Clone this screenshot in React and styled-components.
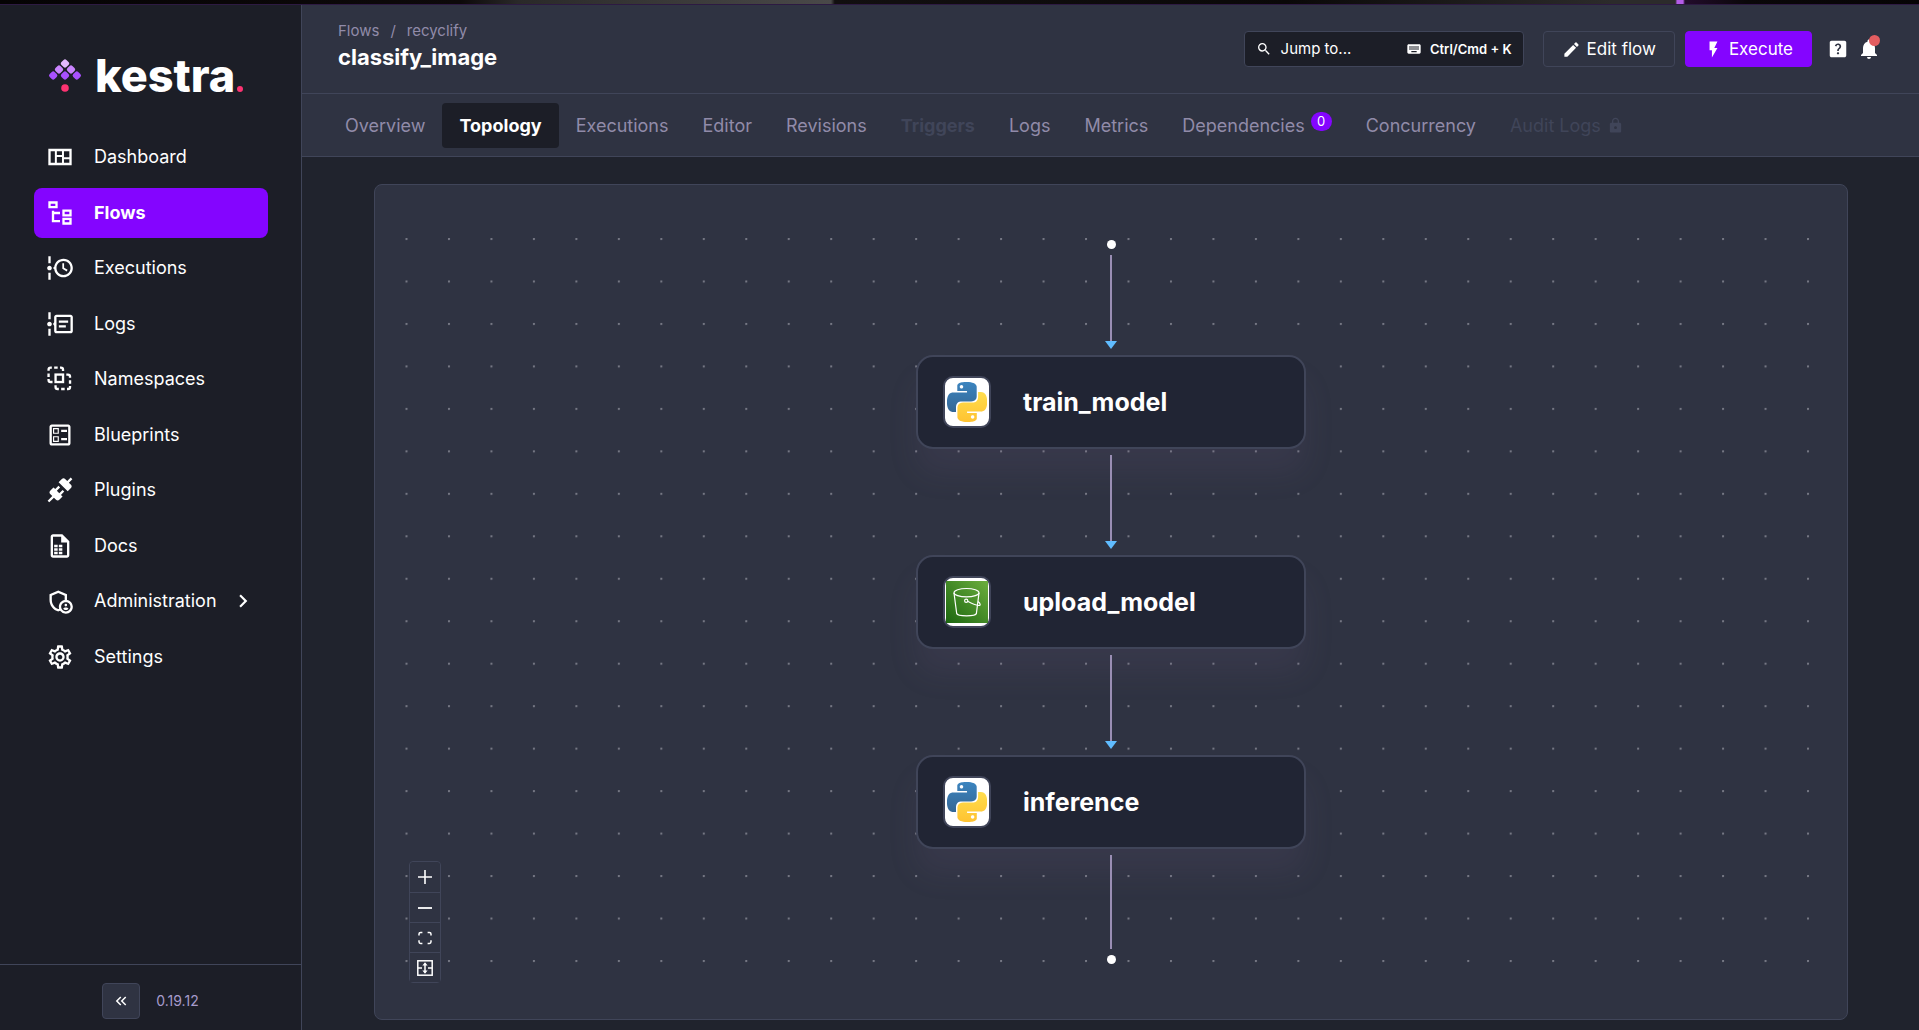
import React from "react";
import styled, { createGlobalStyle, css } from "styled-components";
import {
  MdOutlineBallot,
  MdOutlineAdminPanelSettings,
  MdOutlineSettings,
  MdChevronRight,
  MdKeyboardDoubleArrowLeft,
  MdSearch,
  MdKeyboard,
  MdEdit,
  MdFlashOn,
  MdHelpCenter,
  MdNotifications,
  MdLock,
} from "react-icons/md";

const color = {
  sidebar: "#1c1e27",
  surface: "#2f3342",
  body: "#20232d",
  node: "#212534",
  border: "#404559",
  muted: "#918ba9",
  primary: "#8405ff",
  text: "#ffffff",
  edge: "#9a8eb4",
  arrow: "#60bcff",
  pink: "#fd3372",
  alert: "#e35d60",
};

const GlobalStyle = createGlobalStyle`
  *, *::before, *::after { box-sizing: border-box; }
  body {
    margin: 0;
    background: ${color.body};
    color: ${color.text};
    font-family: Inter, "Liberation Sans", sans-serif;
    font-size: 18px;
    line-height: 24px;
  }
  button { font: inherit; color: inherit; cursor: pointer; }
  a { color: inherit; text-decoration: none; }
  svg { display: block; flex: none; }
`;

const Page = styled.div`
  display: flex;
  flex-direction: column;
  min-height: 100vh;
`;

const TopStrip = styled.div`
  height: 5px;
  border-bottom: 1px solid #2d1a42;
  background: linear-gradient(
    90deg,
    #050304 0%,
    #0d090a 24%,
    #2a2929 27%,
    #4a4949 43.3%,
    #120f10 43.5%,
    #0a0808 67%,
    #2c2b2b 84%,
    #2c2b2b 87.3%,
    #b45ce8 87.4%,
    #b45ce8 87.7%,
    #230c2c 87.8%,
    #0a0709 91%,
    #060405 100%
  );
`;

const Shell = styled.div`
  flex: 1;
  display: grid;
  grid-template-columns: 302px minmax(0, 1fr);
`;

/* ---------- sidebar ---------- */

const Sidebar = styled.aside`
  display: flex;
  flex-direction: column;
  background: ${color.sidebar};
  border-right: 1px solid ${color.border};
`;

const Brand = styled.a`
  display: flex;
  align-items: center;
  gap: 13px;
  height: 127px;
  padding: 14px 0 0 48px;
`;

const BrandName = styled.span`
  font-size: 45px;
  line-height: 48px;
  font-weight: 800;
`;

const BrandDot = styled.span`
  display: inline-block;
  width: 6px;
  height: 6px;
  margin-left: 2px;
  border-radius: 50%;
  background: ${color.pink};
`;

const Menu = styled.ul`
  display: flex;
  flex-direction: column;
  justify-content: space-between;
  height: 550px;
  margin: 0;
  padding: 0 33px 0 34px;
  list-style: none;
`;

const MenuLink = styled.a`
  display: flex;
  align-items: center;
  height: 50px;
  padding: 0 12px;
  border-radius: 8px;
  ${({ $active }) =>
    $active &&
    css`
      background: ${color.primary};
      font-weight: 700;
    `}
`;

const MenuLabel = styled.span`
  flex: 1;
  padding-left: 20px;
`;

const SidebarFooter = styled.div`
  display: flex;
  align-items: center;
  justify-content: center;
  gap: 16px;
  margin-top: auto;
  padding: 18px 0 11px;
  border-top: 1px solid ${color.border};
`;

const CollapseButton = styled.button`
  display: grid;
  place-items: center;
  width: 38px;
  height: 36px;
  padding: 0;
  background: ${color.surface};
  border: 1px solid ${color.border};
  border-radius: 4px;
`;

const Version = styled.span`
  color: #a79bcb;
  font-size: 14px;
`;

/* ---------- header ---------- */

const Main = styled.main`
  display: flex;
  flex-direction: column;
`;

const Header = styled.header`
  display: flex;
  justify-content: space-between;
  align-items: flex-start;
  height: 89px;
  padding: 14px 38px 0 36px;
  background: ${color.surface};
  border-bottom: 1px solid ${color.border};
`;

const Breadcrumb = styled.nav`
  display: flex;
  gap: 11px;
  color: ${color.muted};
  font-size: 15px;
  line-height: 24px;
`;

const Title = styled.h1`
  margin: 0;
  font-size: 22px;
  line-height: 28px;
  font-weight: 700;
`;

const Actions = styled.div`
  display: flex;
  align-items: center;
  gap: 10px;
  padding-top: 12px;
`;

const JumpButton = styled.button`
  display: flex;
  align-items: center;
  width: 280px;
  height: 36px;
  margin-right: 9px;
  padding: 0 11px;
  gap: 9px;
  background: ${color.sidebar};
  border: 1px solid ${color.border};
  border-radius: 4px;
  font-size: 15px;
`;

const Shortcut = styled.span`
  display: flex;
  align-items: center;
  gap: 8px;
  margin-left: auto;
  font-size: 13px;
  font-weight: 600;
`;

const ActionButton = styled.button`
  display: flex;
  align-items: center;
  justify-content: center;
  gap: 6px;
  height: 36px;
  padding: 0 18px;
  background: ${({ $primary }) => ($primary ? color.primary : "transparent")};
  border: 1px solid ${({ $primary }) => ($primary ? color.primary : color.border)};
  border-radius: 4px;
  font-size: 17px;
`;

const HeaderIcons = styled.div`
  display: flex;
  align-items: center;
  gap: 8px;
  padding-left: 5px;
`;

const IconButton = styled.button`
  position: relative;
  padding: 0;
  background: none;
  border: 0;
`;

const AlertDot = styled.span`
  position: absolute;
  top: -2px;
  right: 1px;
  width: 11px;
  height: 11px;
  border-radius: 50%;
  background: ${color.alert};
`;

/* ---------- tabs ---------- */

const Tabs = styled.nav`
  display: flex;
  align-items: center;
  height: 63px;
  padding: 1px 26px 0;
  background: ${color.surface};
  border-bottom: 1px solid ${color.border};
`;

const Tab = styled.a`
  display: flex;
  align-items: center;
  gap: 6px;
  height: 45px;
  padding: 0 17px;
  border-radius: 4px;
  color: ${color.muted};
  font-weight: ${({ $bold }) => ($bold ? 700 : 400)};
  ${({ $active }) =>
    $active &&
    css`
      background: ${color.sidebar};
      color: ${color.text};
    `}
  ${({ $disabled }) =>
    $disabled &&
    css`
      color: ${color.border};
      cursor: not-allowed;
    `}
`;

const Badge = styled.span`
  align-self: flex-start;
  margin-top: 9px;
  min-width: 21px;
  padding: 0 6px;
  border-radius: 10px;
  background: ${color.primary};
  color: ${color.text};
  font-size: 13px;
  line-height: 19px;
  text-align: center;
`;

/* ---------- topology canvas ---------- */

const Canvas = styled.section`
  position: relative;
  flex: 1;
  margin: 27px 71px 10px 72px;
  padding: 24px;
  background: ${color.surface};
  border: 1px solid ${color.border};
  border-radius: 8px;
`;

const Pane = styled.div`
  position: relative;
  height: 100%;
`;

const Dots = styled.svg`
  position: absolute;
  inset: 0;
  width: 100%;
  height: 100%;
`;

const Flow = styled.div`
  position: relative;
  display: flex;
  flex-direction: column;
  align-items: center;
  gap: 6px;
  padding: 31px 0 28px;
`;

const Endpoint = styled.span`
  width: 9px;
  height: 9px;
  border-radius: 50%;
  background: ${color.text};
`;

const EdgeLine = styled.span`
  display: flex;
  flex-direction: column;
  align-items: center;
  height: 94px;

  &::before {
    content: "";
    flex: 1;
    width: 2px;
    background: ${color.edge};
  }
`;

const ArrowHead = styled.span`
  border: 6px solid transparent;
  border-top: 8px solid ${color.arrow};
  border-bottom: 0;
`;

const TaskNode = styled.article`
  display: flex;
  align-items: center;
  gap: 32px;
  width: 390px;
  height: 94px;
  padding: 0 25px;
  background: ${color.node};
  border: 2px solid ${color.border};
  border-radius: 17px;
  box-shadow: 0 25px 30px rgba(130, 103, 148, 0.11);
`;

const TaskIcon = styled.span`
  display: grid;
  place-items: center;
  width: 48px;
  height: 52px;
  background: ${color.text};
  border: 2px solid ${color.border};
  border-radius: 10px;
`;

const TaskName = styled.h2`
  margin: 0;
  font-size: 25px;
  line-height: 32px;
  font-weight: 700;
`;

const Controls = styled.div`
  position: absolute;
  left: 10px;
  bottom: 12px;
  width: 32px;
  border: 1px solid ${color.border};
  border-radius: 4px;
`;

const ControlButton = styled.button`
  display: grid;
  place-items: center;
  width: 100%;
  height: 30px;
  padding: 0;
  background: ${color.surface};
  border: 0;
  border-radius: 4px;

  & + & {
    border-top: 1px solid ${color.border};
    border-radius: 0;
  }
`;

/* ---------- drawings ---------- */

const Glyph = ({ d, size = 28, children }) => (
  <svg width={size} height={size} viewBox="0 0 24 24" fill="currentColor" aria-hidden="true">
    {d && <path d={d} fillRule="evenodd" />}
    {children}
  </svg>
);

const DashboardIcon = () => (
  <Glyph d="M2 5V19H22V5H2M4 7H7.6V17H4V7M9.3 7H13.7V10.3H9.3V7M9.3 12H13.7V17H9.3V12M15.4 7H20V12.3H15.4V7M15.4 14H20V17H15.4V14Z" />
);

const FlowsIcon = () => (
  <Glyph d="M12 13H7V18H12V20H5V10H7V11H12V13M8 4V6H4V4H8M10 2H2V8H10V2M20 11V13H16V11H20M22 9H14V15H22V9M20 18V20H16V18H20M22 16H14V22H22V16Z" />
);

const TimelineClockIcon = () => (
  <Glyph d="M4 2V8H2V2H4M2 22V16H4V22H2M5 12C5 13.11 4.11 14 3 14C1.9 14 1 13.11 1 12C1 10.9 1.9 10 3 10C4.11 10 5 10.9 5 12M15 4C19.42 4 23 7.58 23 12C23 16.42 19.42 20 15 20C10.93 20 7.56 16.94 7.08 13L6 12L7.08 11C7.56 7.06 10.93 4 15 4M15 6C11.69 6 9 8.69 9 12C9 15.31 11.69 18 15 18C18.31 18 21 15.31 21 12C21 8.69 18.31 6 15 6M14 8H15.5V11.8L18.5 13.6L17.75 14.9L14 12.6V8Z" />
);

const TimelineTextIcon = () => (
  <Glyph d="M4 2V8H2V2H4M2 22V16H4V22H2M5 12C5 13.11 4.11 14 3 14C1.9 14 1 13.11 1 12C1 10.9 1.9 10 3 10C4.11 10 5 10.9 5 12M21 4C22.11 4 23 4.9 23 6V18C23 19.11 22.11 20 21 20H9C7.9 20 7 19.11 7 18V13.5L6 12L7 10.5V6C7 4.9 7.9 4 9 4H21M21 18V6H9V18H21M11 9H19V11H11V9M11 13H17V15H11V13Z" />
);

const NamespacesIcon = () => (
  <Glyph>
    <g fill="none" stroke="currentColor" strokeWidth="2">
      <rect x="8.2" y="8.2" width="6.4" height="6.4" />
      <path d="M2.2 5V4Q2.2 2.2 4 2.2H5M7 2.2H10M12 2.2H12.8Q14.6 2.2 14.6 4V5.2M2.2 7.2V10.2M2.2 12V12.8Q2.2 14.6 4 14.6H5.6" />
      <path d="M17.4 8.2H18.8Q20.6 8.2 20.6 10V11M20.6 13V16M20.6 18V18.8Q20.6 20.6 18.8 20.6H18M16 20.6H13M11 20.6H10Q8.2 20.6 8.2 18.8V17.4" />
    </g>
  </Glyph>
);

const PlugIcon = () => (
  <Glyph d="M21.4 7.5C22.2 8.3 22.2 9.6 21.4 10.3L18.6 13.1L10.8 5.3L13.6 2.5C14.4 1.7 15.7 1.7 16.4 2.5L18.2 4.3L21.2 1.3L22.6 2.7L19.6 5.7L21.4 7.5M15.6 13.3L14.2 11.9L11.4 14.7L9.3 12.6L12.1 9.8L10.7 8.4L7.9 11.2L6.4 9.8L3.6 12.6C2.8 13.4 2.8 14.7 3.6 15.4L5.4 17.2L1.4 21.2L2.8 22.6L6.8 18.6L8.6 20.4C9.4 21.2 10.7 21.2 11.4 20.4L14.2 17.6L12.8 16.2L15.6 13.3Z" />
);

const DocsIcon = () => (
  <Glyph d="M14 2H6C4.89 2 4 2.9 4 4V20C4 21.11 4.89 22 6 22H18C19.11 22 20 21.11 20 20V8L14 2M18 20H6V4H13V9H18V20M10 13H7V11H10V13M14 13H11V11H14V13M10 16H7V14H10V16M14 16H11V14H14V16M10 19H7V17H10V19M14 19H11V17H14V19Z" />
);

const diamonds = [
  [16, 4.5, "#e3b8ff"],
  [10, 10.5, "#ca84ff"],
  [22, 10.5, "#ca84ff"],
  [4.2, 16.5, "#a950ff"],
  [16, 16.5, "#a950ff"],
  [27.8, 16.5, "#a950ff"],
];

const BrandMark = () => (
  <svg width="34" height="34" viewBox="-1 0 34 34" aria-hidden="true">
    {diamonds.map(([x, y, fill]) => (
      <rect
        key={`${x}-${y}`}
        x={x - 3.5}
        y={y - 3.5}
        width="7"
        height="7"
        rx="2"
        fill={fill}
        transform={`rotate(45 ${x} ${y})`}
      />
    ))}
    <circle cx="16" cy="29" r="3.8" fill={color.pink} />
  </svg>
);

const PythonIcon = () => (
  <svg width="40" height="40" viewBox="0 0 24 24" aria-hidden="true">
    <defs>
      <linearGradient id="py-blue" x1="0" y1="0" x2="0" y2="1">
        <stop offset="0" stopColor="#3b84bf" />
        <stop offset="1" stopColor="#356795" />
      </linearGradient>
      <linearGradient id="py-yellow" x1="0" y1="0" x2="0" y2="1">
        <stop offset="0" stopColor="#ffdd4d" />
        <stop offset="1" stopColor="#ffc331" />
      </linearGradient>
    </defs>
    <path
      fill="url(#py-blue)"
      d="M14.25.18l.9.2.73.26.59.3.45.32.34.34.25.34.16.33.1.3.04.26.02.2-.01.13V8.5l-.05.63-.13.55-.21.46-.26.38-.3.31-.33.25-.35.19-.35.14-.33.1-.3.07-.26.04-.21.02H8.77l-.69.05-.59.14-.5.22-.41.27-.33.32-.27.35-.2.36-.15.37-.1.35-.07.32-.04.27-.02.21v3.06H3.17l-.21-.03-.28-.07-.32-.12-.35-.18-.36-.26-.36-.36-.35-.46-.32-.59-.28-.73-.21-.88-.14-1.05-.05-1.23.06-1.22.16-1.04.24-.87.32-.71.36-.57.4-.44.42-.33.42-.24.4-.16.36-.1.32-.05.24-.01h.16l.06.01h8.16v-.83H6.18l-.01-2.75-.02-.37.05-.34.11-.31.17-.28.25-.26.31-.23.38-.2.44-.18.51-.15.58-.12.64-.1.71-.06.77-.04.84-.02 1.27.05zm-6.3 1.98l-.23.33-.08.41.08.41.23.34.33.22.41.09.41-.09.33-.22.23-.34.08-.41-.08-.41-.23-.33-.33-.22-.41-.09-.41.09z"
    />
    <path
      fill="url(#py-yellow)"
      d="M21.1 6.11l.28.06.32.12.35.18.36.27.36.35.35.47.32.59.28.73.21.88.14 1.04.05 1.23-.06 1.23-.16 1.04-.24.86-.32.71-.36.57-.4.45-.42.33-.42.24-.4.16-.36.09-.32.05-.24.02-.16-.01h-8.22v.82h5.84l.01 2.76.02.36-.05.34-.11.31-.17.29-.25.25-.31.24-.38.2-.44.17-.51.15-.58.13-.64.09-.71.07-.77.04-.84.01-1.27-.04-1.07-.14-.9-.2-.73-.25-.59-.3-.45-.33-.34-.34-.25-.34-.16-.33-.1-.3-.04-.25-.02-.2.01-.13v-5.34l.05-.64.13-.54.21-.46.26-.38.3-.32.33-.24.35-.2.35-.14.33-.1.3-.06.26-.04.21-.02.13-.01h5.84l.69-.05.59-.14.5-.21.41-.28.33-.32.27-.35.2-.36.15-.36.1-.35.07-.32.04-.28.02-.21V6.07h2.09l.14.01zm-6.47 14.14l-.23.33-.08.41.08.41.23.33.33.23.41.08.41-.08.33-.23.23-.33.08-.41-.08-.41-.23-.33-.33-.23-.41-.08-.41.08z"
    />
  </svg>
);

const BucketIcon = () => (
  <svg width="42" height="42" viewBox="0 0 42 42" aria-hidden="true">
    <defs>
      <linearGradient id="s3" x1="0" y1="1" x2="1" y2="0">
        <stop offset="0" stopColor="#1b660f" />
        <stop offset="1" stopColor="#6cae3e" />
      </linearGradient>
    </defs>
    <rect width="42" height="42" fill="url(#s3)" />
    <g fill="none" stroke="#fff" strokeWidth="1.2">
      <ellipse cx="20.5" cy="11.7" rx="12.5" ry="4.2" />
      <path d="M8 12L10.7 32.5C11.5 35.6 29.6 35.6 30.4 32.5L33 12" />
      <circle cx="20.2" cy="19.7" r="1.6" />
      <path d="M21.7 20.3C26 22.6 30 24.2 32.6 24.5C35 24.6 34.6 22.6 31.9 20.6" />
    </g>
  </svg>
);

const PlusIcon = () => (
  <svg width="14" height="14" viewBox="0 0 14 14" stroke="#fff" strokeWidth="1.6" aria-hidden="true">
    <path d="M7 0V14M0 7H14" />
  </svg>
);

const MinusIcon = () => (
  <svg width="14" height="14" viewBox="0 0 14 14" stroke="#fff" strokeWidth="1.8" aria-hidden="true">
    <path d="M0 7H14" />
  </svg>
);

const FitIcon = () => (
  <svg width="14" height="14" viewBox="0 0 14 14" fill="none" stroke="#fff" strokeWidth="1.5" aria-hidden="true">
    <path d="M1 4.4V3Q1 1.4 2.6 1.4H4.4M9.6 1.4H11.4Q13 1.4 13 3V4.4M13 9.2V10.8Q13 12.4 11.4 12.4H9.6M4.4 12.4H2.6Q1 12.4 1 10.8V9.2" />
  </svg>
);

const OrientationIcon = () => (
  <svg width="16" height="16" viewBox="0 0 16 16" fill="none" stroke="#fff" strokeWidth="1.5" aria-hidden="true">
    <rect x="0.8" y="0.8" width="14.4" height="14.4" />
    <path d="M1 8H5M11 8H15M8 3.5V12.5" />
    <path d="M8 2.2L10.6 5.4H5.4ZM8 13.8L10.6 10.6H5.4Z" fill="#fff" stroke="none" />
  </svg>
);

/* ---------- data ---------- */

const menu = [
  { label: "Dashboard", icon: <DashboardIcon /> },
  { label: "Flows", icon: <FlowsIcon />, active: true },
  { label: "Executions", icon: <TimelineClockIcon /> },
  { label: "Logs", icon: <TimelineTextIcon /> },
  { label: "Namespaces", icon: <NamespacesIcon /> },
  { label: "Blueprints", icon: <MdOutlineBallot size={28} /> },
  { label: "Plugins", icon: <PlugIcon /> },
  { label: "Docs", icon: <DocsIcon /> },
  { label: "Administration", icon: <MdOutlineAdminPanelSettings size={28} />, nested: true },
  { label: "Settings", icon: <MdOutlineSettings size={28} /> },
];

const tabs = [
  { label: "Overview" },
  { label: "Topology", active: true, bold: true },
  { label: "Executions" },
  { label: "Editor" },
  { label: "Revisions" },
  { label: "Triggers", disabled: true, bold: true },
  { label: "Logs" },
  { label: "Metrics" },
  { label: "Dependencies", count: 0 },
  { label: "Concurrency" },
  { label: "Audit Logs", disabled: true, locked: true },
];

const tasks = [
  { id: "train_model", icon: <PythonIcon /> },
  { id: "upload_model", icon: <BucketIcon /> },
  { id: "inference", icon: <PythonIcon /> },
];

const controls = [
  { label: "Zoom in", icon: <PlusIcon /> },
  { label: "Zoom out", icon: <MinusIcon /> },
  { label: "Fit view", icon: <FitIcon /> },
  { label: "Change orientation", icon: <OrientationIcon /> },
];

const ZOOM = 2.1235;
const GRID = 20 * ZOOM;

const Edge = ({ arrow }) => <EdgeLine>{arrow && <ArrowHead />}</EdgeLine>;

export default function App() {
  return (
    <Page>
      <GlobalStyle />
      <TopStrip />
      <Shell>
        <Sidebar>
          <Brand href="#home" aria-label="kestra">
            <BrandMark />
            <BrandName>
              kestra
              <BrandDot />
            </BrandName>
          </Brand>
          <Menu>
            {menu.map((item) => (
              <li key={item.label}>
                <MenuLink href={`#${item.label.toLowerCase()}`} $active={item.active}>
                  {item.icon}
                  <MenuLabel>{item.label}</MenuLabel>
                  {item.nested && <MdChevronRight size={26} />}
                </MenuLink>
              </li>
            ))}
          </Menu>
          <SidebarFooter>
            <CollapseButton aria-label="Collapse menu">
              <MdKeyboardDoubleArrowLeft size={18} />
            </CollapseButton>
            <Version>0.19.12</Version>
          </SidebarFooter>
        </Sidebar>

        <Main>
          <Header>
            <div>
              <Breadcrumb aria-label="Breadcrumb">
                <a href="#flows">Flows</a>
                <span>/</span>
                <a href="#recyclify">recyclify</a>
              </Breadcrumb>
              <Title>classify_image</Title>
            </div>
            <Actions>
              <JumpButton>
                <MdSearch size={16} />
                Jump to...
                <Shortcut>
                  <MdKeyboard size={16} />
                  Ctrl/Cmd + K
                </Shortcut>
              </JumpButton>
              <ActionButton>
                <MdEdit size={19} />
                Edit flow
              </ActionButton>
              <ActionButton $primary>
                <MdFlashOn size={19} />
                Execute
              </ActionButton>
              <HeaderIcons>
                <IconButton aria-label="Help">
                  <MdHelpCenter size={22} />
                </IconButton>
                <IconButton aria-label="Notifications">
                  <MdNotifications size={24} />
                  <AlertDot />
                </IconButton>
              </HeaderIcons>
            </Actions>
          </Header>

          <Tabs aria-label="Flow sections">
            {tabs.map((tab) => (
              <Tab
                key={tab.label}
                href={`#${tab.label.toLowerCase()}`}
                $active={tab.active}
                $bold={tab.bold}
                $disabled={tab.disabled}
              >
                {tab.label}
                {tab.count !== undefined && <Badge>{tab.count}</Badge>}
                {tab.locked && <MdLock size={17} />}
              </Tab>
            ))}
          </Tabs>

          <Canvas>
            <Pane>
              <Dots aria-hidden="true">
                <defs>
                  <pattern id="grid" x="6.5" y="29" width={GRID} height={GRID} patternUnits="userSpaceOnUse">
                    <circle cx="1" cy="1" r="1.1" fill="#7b7d89" />
                  </pattern>
                </defs>
                <rect width="100%" height="100%" fill="url(#grid)" />
              </Dots>
              <Flow>
                <Endpoint />
                <Edge arrow />
                {tasks.map((task, i) => (
                  <React.Fragment key={task.id}>
                    <TaskNode>
                      <TaskIcon>{task.icon}</TaskIcon>
                      <TaskName>{task.id}</TaskName>
                    </TaskNode>
                    <Edge arrow={i < tasks.length - 1} />
                  </React.Fragment>
                ))}
                <Endpoint />
              </Flow>
              <Controls>
                {controls.map((c) => (
                  <ControlButton key={c.label} aria-label={c.label}>
                    {c.icon}
                  </ControlButton>
                ))}
              </Controls>
            </Pane>
          </Canvas>
        </Main>
      </Shell>
    </Page>
  );
}
